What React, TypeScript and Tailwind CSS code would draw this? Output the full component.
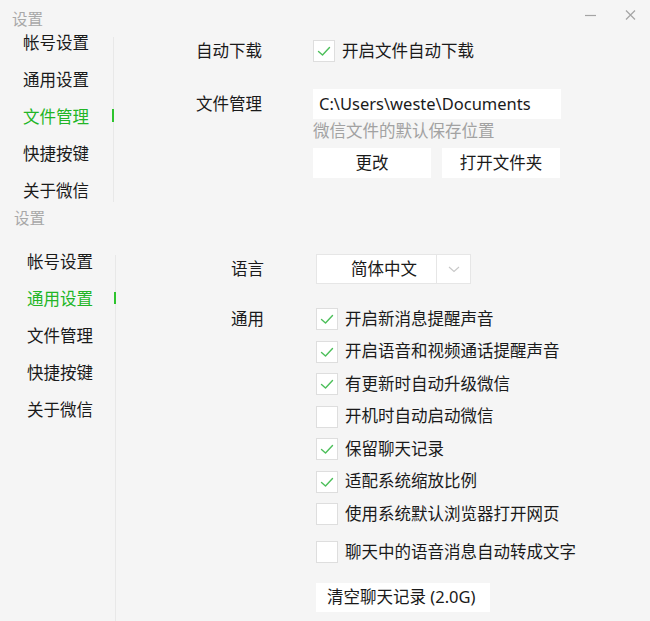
import React from 'react';

const font = {
	fontFamily: '"Noto Sans", "Noto Sans CJK SC", sans-serif',
};

function Check({ on }: { on: boolean }) {
	return (
		<div className="w-[22px] h-[22px] shrink-0 bg-white border border-[#dedede] flex items-center justify-center">
			{on && (
				<svg width="20" height="20" viewBox="0 0 20 20" fill="none">
					<path d="M4.5 10.5 L8.5 14 L15.5 6.5" stroke="#4cbf5a" strokeWidth="1.4" strokeLinecap="round" strokeLinejoin="round" />
				</svg>
			)}
		</div>
	);
}

function Sidebar({ items, active, pl }: { items: string[]; active: string; pl: string }) {
	return (
		<div className={`flex flex-col ${pl}`}>
			{items.map((item) => (
				<div
					key={item}
					className={`h-[37px] leading-[26px] text-[16.5px] whitespace-nowrap ${item === active ? 'text-[#22b526]' : 'text-[#1a1a1a]'}`}
				>
					{item}
				</div>
			))}
		</div>
	);
}

const menu = ['帐号设置', '通用设置', '文件管理', '快捷按键', '关于微信'];

const general = [
	{ label: '开启新消息提醒声音', on: true },
	{ label: '开启语音和视频通话提醒声音', on: true },
	{ label: '有更新时自动升级微信', on: true },
	{ label: '开机时自动启动微信', on: false },
	{ label: '保留聊天记录', on: true },
	{ label: '适配系统缩放比例', on: true },
	{ label: '使用系统默认浏览器打开网页', on: false },
];

export default function App() {
	return (
		<div className="w-[650px] h-[621px] bg-[#f5f5f5] overflow-hidden text-[#1a1a1a]" style={font}>
			{/* File management window */}
			<div className="relative h-[205px]">
				<div className="h-[30px] pl-[12px] pt-[9px] leading-[20px] text-[15.5px] text-[#a8a8a8]">设置</div>
				<div className="absolute top-[6px] right-[10px] flex items-center gap-[22px]">
					<svg width="18" height="18" viewBox="0 0 18 18">
						<path d="M3 9.5 H14" stroke="#a4a4a4" strokeWidth="1.2" />
					</svg>
					<svg width="18" height="18" viewBox="0 0 18 18">
						<path d="M4 4.5 L13 13.5 M13 4.5 L4 13.5" stroke="#a4a4a4" strokeWidth="1.2" />
					</svg>
				</div>

				<div className="flex">
					<div className="w-[113px]">
						<Sidebar items={menu} active="文件管理" pl="pl-[23px]" />
					</div>
					<div className="relative w-px h-[165px] mt-[7px] bg-[#e8e8e8]">
						<div className="absolute left-[-1px] top-[72px] w-[2px] h-[13px] bg-[#2ec42e]" />
					</div>

					<div className="flex flex-col pt-[10px] pl-[82px] text-[16.5px]">
						<div className="flex items-center h-[22px]">
							<div className="w-[117px] whitespace-nowrap">自动下载</div>
							<Check on={true} />
							<span className="ml-[7px] whitespace-nowrap">开启文件自动下载</span>
						</div>

						<div className="flex mt-[27px]">
							<div className="w-[117px] h-[30px] flex items-center whitespace-nowrap">文件管理</div>
							<div className="flex flex-col">
								<div className="w-[248px] h-[30px] bg-white flex items-center pl-[6px] whitespace-nowrap">
									C:\Users\weste\Documents
								</div>
								<div className="mt-[2px] leading-[20px] text-[#a2a2a2] whitespace-nowrap">微信文件的默认保存位置</div>
								<div className="flex gap-[11px] mt-[7px]">
									<button className="w-[118px] h-[30px] bg-white">更改</button>
									<button className="w-[118px] h-[30px] bg-white">打开文件夹</button>
								</div>
							</div>
						</div>
					</div>
				</div>
			</div>

			{/* General settings window */}
			<div className="h-[416px]">
				<div className="h-[26px] pl-[14px] leading-[26px] text-[15.5px] text-[#a8a8a8]">设置</div>
				<div className="flex h-[390px]">
					<div className="w-[115px] pt-[18px]">
						<Sidebar items={menu} active="通用设置" pl="pl-[27px]" />
					</div>
					<div className="relative w-px mt-[24px] bg-[#e8e8e8]">
						<div className="absolute left-[-1px] top-[37px] w-[2px] h-[12px] bg-[#2ec42e]" />
					</div>

					<div className="flex flex-col pt-[23px] pl-[115px] text-[16.5px]">
						<div className="flex items-center h-[30px]">
							<div className="w-[85px] whitespace-nowrap">语言</div>
							<div className="flex h-[30px] bg-white border border-[#e6e6e6]">
								<div className="w-[119px] pl-[34px] flex items-center whitespace-nowrap">简体中文</div>
								<div className="w-px bg-[#e6e6e6]" />
								<div className="w-[33px] flex items-center justify-center">
									<svg width="14" height="10" viewBox="0 0 14 10" fill="none">
										<path d="M2 3 L7 7.5 L12 3" stroke="#c8c8c8" strokeWidth="1.1" />
									</svg>
								</div>
							</div>
						</div>

						<div className="flex mt-[24px]">
							<div className="w-[85px] h-[22px] flex items-center whitespace-nowrap">通用</div>
							<div className="flex flex-col">
								<div className="flex flex-col gap-[10.5px]">
									{general.map((g) => (
										<div key={g.label} className="flex items-center h-[22px]">
											<Check on={g.on} />
											<span className="ml-[7px] whitespace-nowrap">{g.label}</span>
										</div>
									))}
								</div>
								<div className="flex items-center h-[22px] mt-[16px]">
									<Check on={false} />
									<span className="ml-[7px] whitespace-nowrap">聊天中的语音消息自动转成文字</span>
								</div>
								<button className="mt-[20px] w-[174px] h-[29px] bg-white text-left pl-[11px] whitespace-nowrap">
									清空聊天记录 (2.0G)
								</button>
							</div>
						</div>
					</div>
				</div>
			</div>
		</div>
	);
}
